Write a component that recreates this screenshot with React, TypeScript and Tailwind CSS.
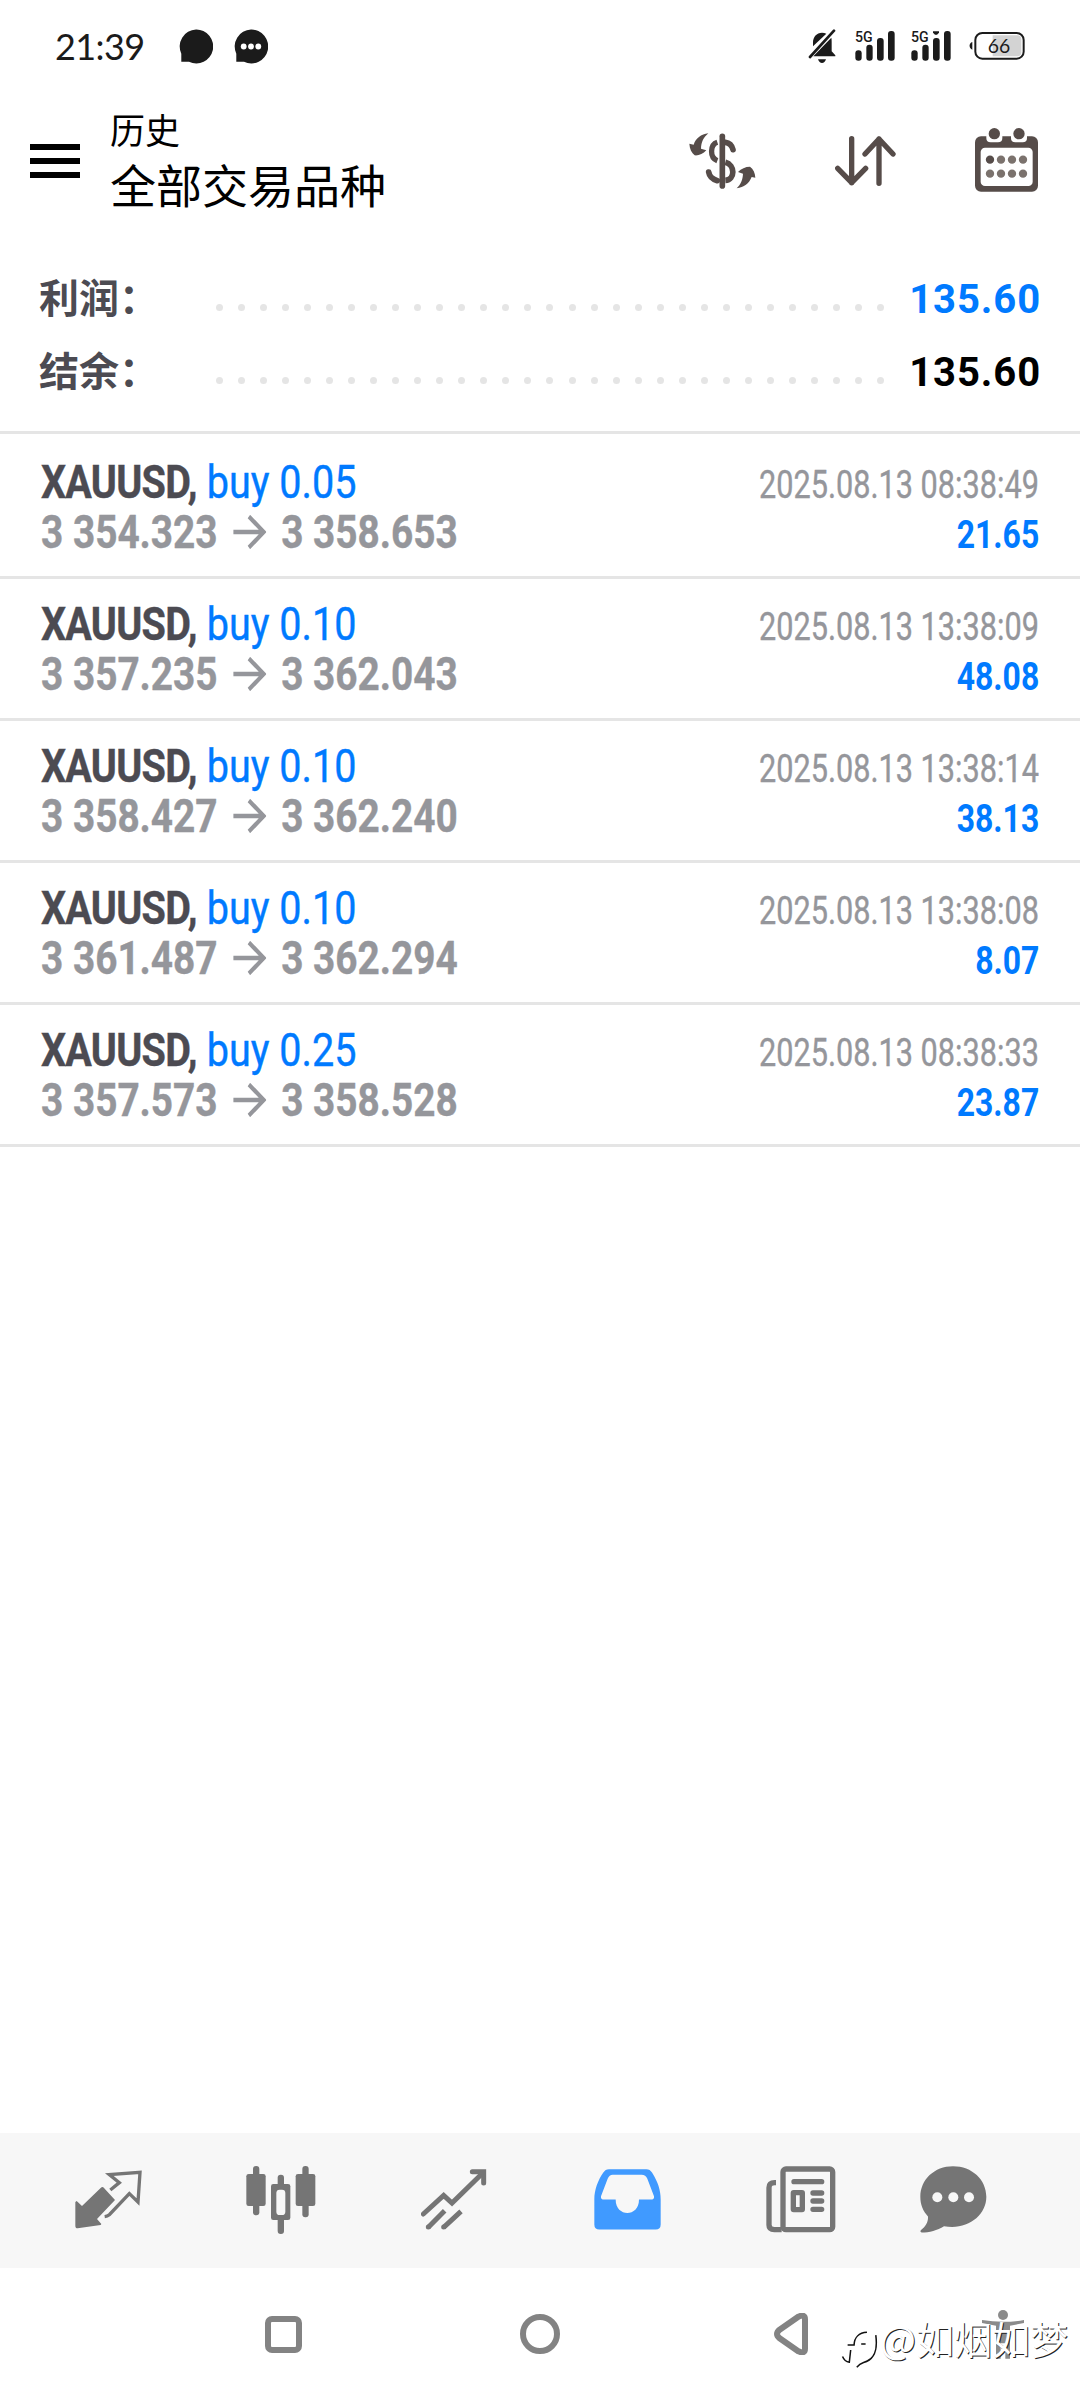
import type { ReactNode } from 'react'

interface Trade {
  symbol: string
  side: string
  volume: string
  open: string
  close: string
  time: string
  profit: string
}

const trades: Trade[] = [
  { symbol: 'XAUUSD', side: 'buy', volume: '0.05', open: '3 354.323', close: '3 358.653', time: '2025.08.13 08:38:49', profit: '21.65' },
  { symbol: 'XAUUSD', side: 'buy', volume: '0.10', open: '3 357.235', close: '3 362.043', time: '2025.08.13 13:38:09', profit: '48.08' },
  { symbol: 'XAUUSD', side: 'buy', volume: '0.10', open: '3 358.427', close: '3 362.240', time: '2025.08.13 13:38:14', profit: '38.13' },
  { symbol: 'XAUUSD', side: 'buy', volume: '0.10', open: '3 361.487', close: '3 362.294', time: '2025.08.13 13:38:08', profit: '8.07' },
  { symbol: 'XAUUSD', side: 'buy', volume: '0.25', open: '3 357.573', close: '3 358.528', time: '2025.08.13 08:38:33', profit: '23.87' },
]

// Status bar

function ChatDot({ dots = false }: { dots?: boolean }) {
  return (
    <svg className="h-[35px] w-[34px]" viewBox="0 0 34 35">
      <path d="M17 .5a16.7 17 0 1 1-7 32.2H2.3v-8A17 17 0 0 1 17 .5z" fill="#1b1b1b" />
      {dots && [9.7, 17, 24.3].map((x) => <circle key={x} cx={x} cy="17.5" r="2.9" fill="#fff" />)}
    </svg>
  )
}

function BellOff() {
  return (
    <svg className="h-[34px] w-7" viewBox="444 86 84 102" fill="#1b1b1b">
      <path d="M459 138v-12c0-16 11-29 27-29 5 0 9 1 13 3zM514 112c1 4 1 8 1 13v28l11 12v3h-66z" />
      <path d="M474 177h24c-2 7-7 11-12 11s-10-4-12-11z" />
      <path d="M450 170 522 91" stroke="#1b1b1b" strokeWidth="8" strokeLinecap="round" />
    </svg>
  )
}

function Signal({ weak = false }: { weak?: boolean }) {
  return (
    <svg className="h-[30px] w-10 overflow-visible" viewBox="585 92 120 90" fill="#1b1b1b">
      <text x="585" y="126" fontSize="45" textLength="53" lengthAdjust="spacingAndGlyphs" className="font-['Roboto',sans-serif] font-medium">
        5G
      </text>
      <rect x="586" y="150" width="19" height="31" rx="9" />
      <rect x="619" y="133" width="19" height="48" rx="9" />
      <rect x="651" y="113" width="20" height="68" rx="9" />
      <rect x="684" y="92" width="20" height="89" rx="9" />
      {weak && <path d="M651 93h18v4l-6 6h-6l-6-6z" />}
    </svg>
  )
}

function Battery() {
  return (
    <svg className="h-7 w-14" viewBox="928 95 168 84">
      <path d="M938 125v23c-11-3-11-20 0-23z" fill="#1b1b1b" />
      <path d="M999 105h74q12 0 12 12v39q0 12-12 12h-74z" fill="#d3d3d3" />
      <rect x="947" y="98" width="145" height="77" rx="21" fill="none" stroke="#1b1b1b" strokeWidth="6" />
      <text x="1018" y="158" textAnchor="middle" fontSize="58" fill="#1b1b1b" className="font-['Lato',sans-serif]">
        66
      </text>
    </svg>
  )
}

// Toolbar

function CurrencyIcon() {
  return (
    <svg className="h-14 w-[67px]" viewBox="86 399 201 168" fill="none" stroke="#564c49" strokeLinecap="round">
      <path d="M186 409v149" strokeWidth="17" />
      <path d="M171 427c-22 7-24 46 0 55" strokeWidth="16" strokeLinecap="butt" />
      <path d="M195 427q18 2 23 22" strokeWidth="17" />
      <path d="M195 487c30 8 30 52 0 54" strokeWidth="17" strokeLinecap="butt" />
      <path d="M145 516q3 19 26 26" strokeWidth="17" />
      <path d="M144 400c-22 3-38 15-44 34l-13-3c1 16 7 28 16 35 13 1 25-4 35-15l-16-5c1-20 7-33 22-46z" fill="#564c49" stroke="none" />
      <path d="M229 565c22-4 37-14 45-34l11 2c-1-15-6-26-16-33-14 0-26 6-36 16l15 5c-1 19-6 31-19 44z" fill="#564c49" stroke="none" />
    </svg>
  )
}

function SortIcon() {
  return (
    <svg className="h-[50px] w-[61px]" viewBox="524 407 183 150" fill="none" stroke="#564c49" strokeWidth="16" strokeLinecap="round" strokeLinejoin="round">
      <path d="M574 415v132M532 504l42 43 42-43" />
      <path d="M656 549V416M614 461l42-45 42 45" />
    </svg>
  )
}

function CalendarIcon() {
  return (
    <svg className="h-16 w-[63px]" viewBox="945 383 189 192">
      <rect x="945" y="408" width="189" height="166" rx="18" fill="#564c49" />
      <path d="M979 400h48v13q0 13-13 13h-22q-13 0-13-13zM1053 400h48v13q0 13-13 13h-22q-13 0-13-13z" fill="#fff" />
      <circle cx="1003" cy="400" r="17" fill="#564c49" />
      <circle cx="1077" cy="400" r="17" fill="#564c49" />
      <rect x="962" y="442" width="156" height="115" rx="13" fill="#fff" />
      {[478, 520].map((y) =>
        [990, 1023, 1056, 1089].map((x) => (
          <circle key={`${x}-${y}`} cx={x} cy={y} r="12.5" fill={x === 990 && y === 478 ? '#564c49' : '#7b726d'} />
        ))
      )}
    </svg>
  )
}

// Bottom tabs

function QuotesIcon() {
  return (
    <svg className="h-[59px] w-[67px]" viewBox="105 123 201 177">
      <path d="M187 174q3 0 5 3l33 36-54 57 13 15-2 3-69 10q-7 0-7-8v-71l4-3 16 15 56-54q3-3 5-3z" fill="#757575" />
      <path d="m211 183 27-22-30-24 92-7-6 89-26-25-60 63q-6 5-14 6" fill="none" stroke="#757575" strokeWidth="10" />
    </svg>
  )
}

function ChartsIcon() {
  return (
    <svg className="h-[68px] w-[70px]" viewBox="619 108 210 204" fill="#757575">
      <rect x="640" y="108" width="19" height="148" rx="9" />
      <rect x="620" y="132" width="58" height="96" rx="7" />
      <rect x="714" y="134" width="19" height="178" rx="9" />
      <rect x="694" y="162" width="58" height="108" rx="7" />
      <rect x="710" y="179" width="27" height="76" rx="10" fill="#f7f7f7" />
      <rect x="788" y="108" width="19" height="154" rx="9" />
      <rect x="768" y="132" width="59" height="96" rx="7" />
    </svg>
  )
}

function TradeIcon() {
  return (
    <svg className="h-[61px] w-[66px]" viewBox="1144 116 198 183" fill="none" stroke="#757575" strokeWidth="15">
      <path d="m1151 251 61-56 25 23 93-91" strokeLinecap="round" />
      <path d="M1298 124h34v34" strokeLinecap="round" />
      <path d="m1166 291 49-50M1212 291l52-48" />
      <circle cx="1166" cy="290" r="7.5" fill="#757575" stroke="none" />
      <circle cx="1212" cy="290" r="7.5" fill="#757575" stroke="none" />
    </svg>
  )
}

function HistoryIcon() {
  return (
    <svg className="h-[61px] w-[67px]" viewBox="162 116 201 182" fill="#409aff" fillRule="evenodd">
      <path d="M207 116h112q11 0 17 10c18 28 26 54 26 80v76q0 15-15 15H178q-15 0-15-15v-76c0-26 10-56 27-80q6-10 17-10zM218 133q-10 0-15 12l-20 52q-2 10 10 10h34c0 54 70 54 70 0h35q12 0 10-10l-20-52q-5-12-17-12z" />
    </svg>
  )
}

function NewsIcon() {
  return (
    <svg className="h-[67px] w-[70px]" viewBox="679 107 210 201" fill="none" stroke="#757575" strokeWidth="16" strokeLinecap="round">
      <rect x="730" y="116" width="149" height="182" rx="9" />
      <path d="M709 157h-4q-17 0-17 15v112q0 14 16 14h22" strokeLinecap="butt" />
      <path d="M763 154h83M820 188h26M820 212h26M820 237h26" />
      <rect x="761" y="187" width="27" height="51" rx="1" strokeWidth="16" />
    </svg>
  )
}

function MessagesIcon() {
  return (
    <svg className="h-[67px] w-[67px]" viewBox="1139 107 201 200">
      <path d="M1238 107c57 0 100 40 100 92 0 58-59 101-127 88-20 12-44 19-67 19q-7-3-1-8c13-11 21-24 20-40-15-16-23-35-23-59 0-52 42-92 98-92z" fill="#757575" />
      {[1191, 1239, 1286].map((x) => (
        <circle key={x} cx={x} cy="200" r="15" fill="#f7f7f7" />
      ))}
    </svg>
  )
}

function SummaryRow({ label, children }: { label: string; children: ReactNode }) {
  return (
    <div className="flex h-[73px] items-center pr-[39px] pl-[39px]">
      <span className="w-[177px] pb-1 text-[40px] leading-[56px] font-semibold whitespace-nowrap text-[#4c4b52]">{label}</span>
      <div className="flex w-[668px] justify-between pt-[20px]">
        {Array.from({ length: 31 }, (_, i) => (
          <span key={i} className="size-[7px] rounded-full bg-[#e5e5e5]" />
        ))}
      </div>
      <span className="ml-auto pt-1 font-['Roboto',sans-serif] text-[40px] leading-[56px] font-bold tracking-[0.9px]">{children}</span>
    </div>
  )
}

function TradeRow({ trade }: { trade: Trade }) {
  return (
    <div className="flex h-[142px] justify-between border-b-[3px] border-[#e5e5e5] pt-5 pr-[41px] pl-[41px] font-['Roboto',sans-serif] whitespace-nowrap">
      <div className="w-[500px] text-[47px] leading-[50px]">
        <div className="w-max origin-left scale-x-[0.842] text-[#007aff] [-webkit-text-stroke:0.4px]">
          <b className="tracking-[-0.9px] text-[#4c4b52]">{trade.symbol},</b> {trade.side} {trade.volume}
        </div>
        <div className="flex w-max origin-left scale-x-[0.825] items-center font-bold text-[#95969b] [-webkit-text-stroke:0.4px]">
          {trade.open}
          <svg className="mr-[18px] ml-[19px] h-[34px] w-[40px]" viewBox="0 0 40 34" fill="none" stroke="#95969b" strokeWidth="4.5">
            <path d="M0 17h37M19 1.5 37 17 19 32.5" />
          </svg>
          {trade.close}
        </div>
      </div>
      <div className="flex flex-col items-end pt-[3px] text-[38px] leading-[50px]">
        <div className="w-max origin-right scale-x-[0.807] text-[#95969b] [-webkit-text-stroke:0.4px]">{trade.time}</div>
        <div className="w-max origin-right scale-x-[0.84] font-bold text-[#007aff]">{trade.profit}</div>
      </div>
    </div>
  )
}

export default function App() {
  return (
    <div className="relative flex h-[2400px] w-[1080px] flex-col overflow-hidden bg-white font-['Noto_Sans_CJK_SC',sans-serif]">
      {/* Status bar */}
      <div className="flex h-[92px] items-center pr-[55px] pl-[55px]">
        <span className="w-[124px] font-['Lato',sans-serif] text-[36px] leading-[40px] tracking-[-0.6px] text-[#1b1b1b]">21:39</span>
        <div className="flex gap-[21px]">
          <ChatDot />
          <ChatDot dots />
        </div>
        <div className="ml-auto flex items-center">
          <BellOff />
          <div className="ml-[19px] flex gap-4">
            <Signal />
            <Signal weak />
          </div>
          <div className="ml-[18px]">
            <Battery />
          </div>
        </div>
      </div>

      {/* Header */}
      <div className="flex h-[136px] items-center pt-0.5 pr-[42px] pl-[30px] text-black">
        <div className="flex w-[50px] flex-col gap-2">
          <span className="h-1.5 bg-black" />
          <span className="h-1.5 bg-black" />
          <span className="h-1.5 bg-black" />
        </div>
        <div className="ml-[30px] pb-2 whitespace-nowrap">
          <div className="text-[35px] leading-[52px]">历史</div>
          <div className="text-[46px] leading-[57px]">全部交易品种</div>
        </div>
        <div className="ml-auto flex items-center">
          <CurrencyIcon />
          <div className="ml-[79px]">
            <SortIcon />
          </div>
          <div className="ml-[79px] pb-0.5">
            <CalendarIcon />
          </div>
        </div>
      </div>

      {/* Totals */}
      <div className="h-[206px] border-b-[3px] border-[#e5e5e5] pt-[33px]">
        <SummaryRow label="利润：">
          <span className="text-[#007aff]">135.60</span>
        </SummaryRow>
        <SummaryRow label="结余：">
          <span className="text-black">135.60</span>
        </SummaryRow>
      </div>

      {/* Closed positions */}
      <div className="flex-1 pt-[3px]">
        {trades.map((trade) => (
          <TradeRow key={trade.time} trade={trade} />
        ))}
      </div>

      {/* Tabs */}
      <div className="flex h-[135px] items-center bg-[#f7f7f7] pb-0.5 pl-[75px]">
        <QuotesIcon />
        <div className="ml-[104px]">
          <ChartsIcon />
        </div>
        <div className="ml-[105px]">
          <TradeIcon />
        </div>
        <div className="ml-[107px]">
          <HistoryIcon />
        </div>
        <div className="ml-[105px]">
          <NewsIcon />
        </div>
        <div className="ml-[84px]">
          <MessagesIcon />
        </div>
      </div>

      {/* System navigation */}
      <div className="flex h-[132px] items-center pl-[265px]">
        <div className="size-[37px] rounded-[7px] border-[6px] border-[#838383]" />
        <div className="ml-[218px] size-10 rounded-full border-[6px] border-[#838383]" />
        <svg className="ml-[214px] h-[42px] w-[35px]" viewBox="0 0 105 126">
          <path d="M73 11q20-9 20 8v88q0 17-20 8L17 76q-16-13 0-26z" fill="none" stroke="#838383" strokeWidth="18" />
        </svg>
        <svg className="ml-[173px] h-[49px] w-[42px]" viewBox="726 119 126 147" fill="#8b8b8b">
          <circle cx="789" cy="134" r="15" />
          <path d="M726 149q63 11 126 0v9l-42 8v99h-14v-46h-14v46h-14v-99l-42-8z" />
        </svg>
      </div>

      {/* Author mark, laid over the navigation bar */}
      <div className="absolute top-[2307px] left-[841px] flex items-center text-[38px] leading-[50px] whitespace-nowrap text-white [text-shadow:1px_1px_0_#222]">
        <svg className="mt-[24px] mr-[2px] h-[38px] w-[37px]" viewBox="303 170 108 112" fill="none">
          <path d="M307 245q6 15 20 17l4-36M322 211h19c1-21 14-36 38-37" stroke="#111" strokeWidth="4.5" />
          <path d="M362 208h13M405 182c6 45-3 72-36 81q-12 4-20 14" stroke="#111" strokeWidth="4.5" />
        </svg>
        @如烟如梦
      </div>
    </div>
  )
}
